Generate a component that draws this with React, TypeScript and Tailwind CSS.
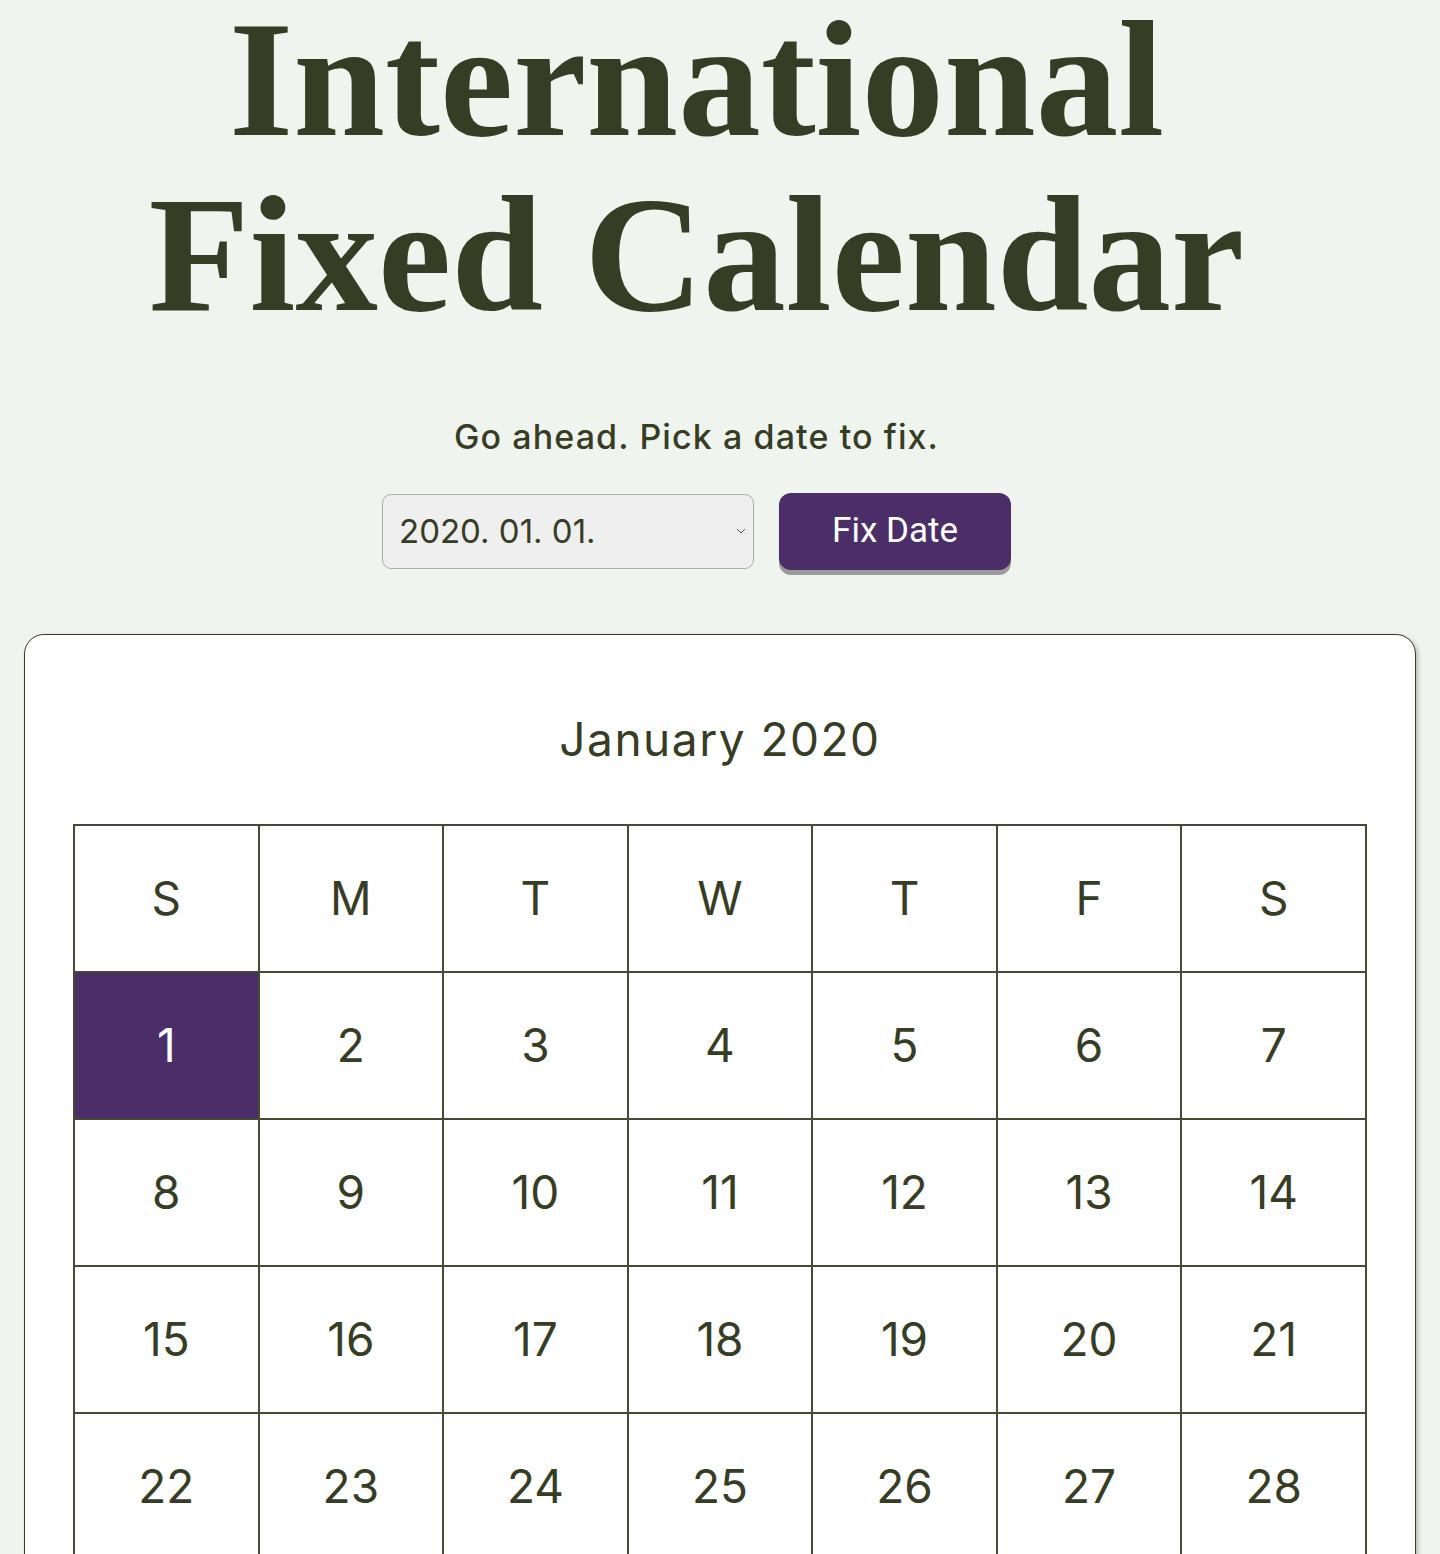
import React from "react";

const days = ["S", "M", "T", "W", "T", "F", "S"];
const weeks = [
  [1, 2, 3, 4, 5, 6, 7],
  [8, 9, 10, 11, 12, 13, 14],
  [15, 16, 17, 18, 19, 20, 21],
  [22, 23, 24, 25, 26, 27, 28],
];

export default function App() {
  return (
    <div className="min-h-[1554px] bg-[#eff4ee] text-[#373d24] overflow-hidden">
      <header className="pr-[47px]">
        <h1
          className="text-center font-bold text-[165px] leading-[175px] -mt-[8px]"
          style={{ fontFamily: '"Liberation Serif", serif' }}
        >
          International
          <br />
          Fixed Calendar
        </h1>
        <p
          className="mt-[75px] text-center text-[34px] leading-[40px] font-medium tracking-[1.1px]"
          style={{ fontFamily: 'Inter, sans-serif' }}
        >
          Go ahead. Pick a date to fix.
        </p>
        <div className="mt-[37px] flex justify-center gap-[25px]">
          <div className="relative w-[372px] h-[75px] rounded-[9px] border border-[#acacac] bg-[#efefef] flex items-center pl-[16px]">
            <span className="text-[33px] text-[#373d24]" style={{ fontFamily: 'Inter, sans-serif' }}>
              2020. 01. 01.
            </span>
            <svg className="absolute right-[7px] top-[33px]" width="10" height="6" viewBox="0 0 10 6" fill="none">
              <path d="M1 1l4 4 4-4" stroke="#555" strokeWidth="1" />
            </svg>
          </div>
          <button
            className="w-[232px] h-[77px] -mt-[1px] rounded-[12px] bg-[#4b2d68] text-white text-[35px] shadow-[0_5px_0_#9a9a9a]"
            style={{ fontFamily: 'Roboto, sans-serif' }}
          >
            Fix Date
          </button>
        </div>
      </header>
      <div className="mx-[24px] mt-[64px] rounded-[20px] border border-[#373d24] bg-white shadow-[2px_2px_4px_rgba(0,0,0,0.25)] px-[48px] pt-[76px] pb-[60px]">
        <h2
          className="text-center text-[46px] leading-[56px] tracking-[1.5px]"
          style={{ fontFamily: 'Inter, sans-serif' }}
        >
          January 2020
        </h2>
        <table className="mt-[57px] w-full border-collapse table-fixed" style={{ fontFamily: 'Inter, sans-serif' }}>
          <thead>
            <tr>
              {days.map((d, i) => (
                <th key={i} className="h-[147px] border-2 border-[#464a34] text-[46px] font-normal text-center">
                  {d}
                </th>
              ))}
            </tr>
          </thead>
          <tbody>
            {weeks.map((w, wi) => (
              <tr key={wi}>
                {w.map((n) => (
                  <td
                    key={n}
                    className={
                      n === 1
                        ? "h-[147px] border-2 border-[#464a34] text-[46px] text-center bg-[#4b2d68] text-white"
                        : "h-[147px] border-2 border-[#464a34] text-[46px] text-center"
                    }
                  >
                    {n}
                  </td>
                ))}
              </tr>
            ))}
          </tbody>
        </table>
      </div>
    </div>
  );
}
